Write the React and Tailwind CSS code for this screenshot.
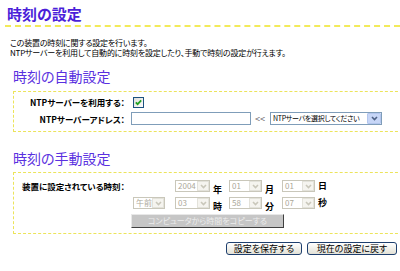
import React from "react";

function Chevron({ color }) {
  return (
    <svg width="9" height="7" viewBox="0 0 9 7">
      <path d="M2 2 L4.5 4.5 L7 2" fill="none" stroke={color} strokeWidth="1.6" />
    </svg>
  );
}

function Sel({ w, text, disabled }) {
  if (disabled) {
    return (
      <div className={`${w} h-[12px] flex items-stretch border border-[#c9c7ba] bg-white`}>
        <span className="flex-1 pl-[2px] text-[8px] leading-[10px] text-[#aca899] overflow-hidden whitespace-nowrap">
          {text}
        </span>
        <span className="w-[12px] flex items-center justify-center bg-[#f5f4ef] border border-[#e3e2da]">
          <Chevron color="#c9c7ba" />
        </span>
      </div>
    );
  }
  return (
    <div className={`${w} h-[13px] flex items-stretch border border-[#7f9db9] bg-white`}>
      <span className="flex-1 pl-[2px] text-[7px] tracking-[-0.3px] leading-[11px] text-black overflow-hidden whitespace-nowrap">
        {text}
      </span>
      <span className="w-[14px] flex items-center justify-center bg-[#c7d6f7] border border-[#b3c6ee] rounded-[1px]">
        <Chevron color="#4d6185" />
      </span>
    </div>
  );
}

function Unit({ children }) {
  return <span className="pl-[3px] text-[9px] font-bold leading-[12px]">{children}</span>;
}

export default function App() {
  return (
    <div className="w-[400px] h-[271px] overflow-hidden bg-white text-black font-['Noto_Sans_CJK_JP',sans-serif] [font-feature-settings:'palt']">
      <h1 className="pl-[7px] pt-[5px] text-[15px] leading-[18px] font-bold text-[#4b1fd9]">時刻の設定</h1>
      <div className="ml-[5px] mt-[2px] border-t-2 border-dashed border-[#f2ea5a]" />

      <p className="pl-[10px] mt-[11px] text-[8px] tracking-[-0.2px] leading-[10px]">
        この装置の時刻に関する設定を行います。
        <br />
        NTPサーバーを利用して自動的に時刻を設定したり、手動で時刻の設定が行えます。
      </p>

      <h2 className="ml-[13px] mt-[10px] text-[14px] leading-[16px] text-[#5a30e0]">時刻の自動設定</h2>

      <div className="ml-[13px] mt-[7px] w-[395px] border border-dashed border-[#ece45a] pt-[4px] pb-[6px]">
        <div className="flex items-center h-[12px]">
          <span className="w-[117px] pr-[6px] text-right text-[8.5px] font-bold leading-[12px]">NTPサーバーを利用する：</span>
          <span className="ml-[2px]">
            <svg width="11" height="11" viewBox="0 0 11 11">
              <defs>
                <linearGradient id="cb" x1="0" y1="0" x2="1" y2="1">
                  <stop offset="0" stopColor="#dcdcd7" />
                  <stop offset="1" stopColor="#ffffff" />
                </linearGradient>
              </defs>
              <rect x="0.5" y="0.5" width="10" height="10" fill="url(#cb)" stroke="#1c5180" />
              <path d="M2.8 5.3 L4.6 7.2 L8.2 3.3" fill="none" stroke="#21a121" strokeWidth="1.7" />
            </svg>
          </span>
        </div>
        <div className="flex items-center h-[13px] mt-[4px]">
          <span className="w-[117px] pr-[6px] text-right text-[8.5px] font-bold leading-[12px]">NTPサーバーアドレス：</span>
          <div className="w-[120px] h-[13px] border border-[#7f9db9] bg-white" />
          <span className="w-[19px] pl-[4px] text-[9px] leading-[12px] text-[#666]">&lt;&lt;</span>
          <Sel w="w-[112px]" text="NTPサーバを選択してください" />
        </div>
      </div>

      <h2 className="ml-[13px] mt-[18px] text-[14px] leading-[16px] text-[#5a30e0]">時刻の手動設定</h2>

      <div className="ml-[13px] mt-[6px] w-[395px] border border-dashed border-[#ece45a] pl-[8px] pt-[7px] pb-[5px]">
        <div className="flex items-center h-[12px]">
          <span className="w-[153px] text-[8.5px] font-bold leading-[12px]">装置に設定されている時刻：</span>
          <Sel w="w-[35px]" text="2004" disabled />
          <span className="w-[19px]"><Unit>年</Unit></span>
          <Sel w="w-[33px]" text="01" disabled />
          <span className="w-[20px]"><Unit>月</Unit></span>
          <Sel w="w-[33px]" text="01" disabled />
          <Unit>日</Unit>
        </div>
        <div className="flex items-center h-[12px] mt-[5px]">
          <span className="w-[111px]" />
          <Sel w="w-[32px]" text="午前" disabled />
          <span className="w-[10px]" />
          <Sel w="w-[35px]" text="03" disabled />
          <span className="w-[19px]"><Unit>時</Unit></span>
          <Sel w="w-[33px]" text="58" disabled />
          <span className="w-[20px]"><Unit>分</Unit></span>
          <Sel w="w-[33px]" text="07" disabled />
          <Unit>秒</Unit>
        </div>
        <div className="flex mt-[5px]">
          <span className="w-[109px]" />
          <button
            disabled
            className="w-[153px] h-[14px] bg-[#c6c6c6] border border-t-[#e8e8e8] border-l-[#e8e8e8] border-r-[#404040] border-b-[#404040] text-[8px] leading-[12px] text-[#ececec]"
          >
            コンピュータから時間をコピーする
          </button>
        </div>
      </div>

      <div className="flex justify-end gap-[5px] pr-[3px] mt-[8px]">
        <button className="w-[76px] h-[13px] rounded-[3px] border border-[#1e3f6e] bg-linear-to-b from-white to-[#e3e1d6] text-[9px] leading-[11px]">
          設定を保存する
        </button>
        <button className="w-[90px] h-[13px] rounded-[3px] border border-[#1e3f6e] bg-linear-to-b from-white to-[#e3e1d6] text-[9px] leading-[11px]">
          現在の設定に戻す
        </button>
      </div>
    </div>
  );
}
